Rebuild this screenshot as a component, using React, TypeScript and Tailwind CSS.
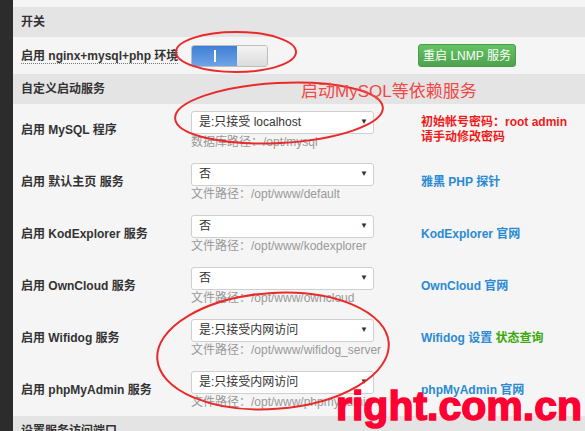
import React from "react";

const font = "font-['Liberation_Sans','Noto_Sans_CJK_SC',sans-serif]";

function Header({ title }: { title: string }) {
  return (
    <div className="h-[30px] shrink-0 bg-[#e4e4e4] pl-[8px] flex items-center text-[12px] font-bold text-[#333]">
      {title}
    </div>
  );
}

function Select({ value }: { value: string }) {
  return (
    <div className="w-[183px] h-[23px] bg-white border border-[#cfcfcf] rounded-[3px] flex items-center justify-between pl-[7px] pr-[5px] text-[12px] text-[#333]">
      <span>{value}</span>
      <span className="text-[8px] text-[#333]">▼</span>
    </div>
  );
}

type Row = {
  label: string;
  value: string;
  hintLabel: string;
  path: string;
  right: React.ReactNode;
};

const rows: Row[] = [
  {
    label: "启用 MySQL 程序",
    value: "是:只接受 localhost",
    hintLabel: "数据库路径：",
    path: "/opt/mysql",
    right: (
      <div className="text-[#ee1b1b] font-bold leading-[15px] whitespace-nowrap">
        <div>初始帐号密码：root admin</div>
        <div>请手动修改密码</div>
      </div>
    ),
  },
  {
    label: "启用 默认主页 服务",
    value: "否",
    hintLabel: "文件路径：",
    path: "/opt/www/default",
    right: <span className="text-[#2a8ad4] font-bold">雅黑 PHP 探针</span>,
  },
  {
    label: "启用 KodExplorer 服务",
    value: "否",
    hintLabel: "文件路径：",
    path: "/opt/www/kodexplorer",
    right: <span className="text-[#2a8ad4] font-bold">KodExplorer 官网</span>,
  },
  {
    label: "启用 OwnCloud 服务",
    value: "否",
    hintLabel: "文件路径：",
    path: "/opt/www/owncloud",
    right: <span className="text-[#2a8ad4] font-bold">OwnCloud 官网</span>,
  },
  {
    label: "启用 Wifidog 服务",
    value: "是:只接受内网访问",
    hintLabel: "文件路径：",
    path: "/opt/www/wifidog_server",
    right: (
      <span className="font-bold">
        <span className="text-[#2a8ad4]">Wifidog 设置 </span>
        <span className="text-[#3aa80a]">状态查询</span>
      </span>
    ),
  },
  {
    label: "启用 phpMyAdmin 服务",
    value: "是:只接受内网访问",
    hintLabel: "文件路径：",
    path: "/opt/www/phpmyadmin",
    right: <span className="text-[#2a8ad4] font-bold">phpMyAdmin 官网</span>,
  },
];

export default function App() {
  return (
    <div className={`relative w-[585px] h-[431px] overflow-hidden flex bg-[#f5f5f5] ${font}`}>
      {/* dark side bar */}
      <div className="w-[13px] shrink-0 bg-[#2c2c2c]" />

      <div className="flex-1 flex flex-col pt-[7px]">
        <Header title="开关" />

        <div className="h-[37px] shrink-0 flex items-center pl-[8px]">
          <div className="w-[170px] text-[12px] font-bold text-[#333]">
            <span className="border-b border-dotted border-[#777]">启用 nginx+mysql+php 环境</span>
          </div>
          <div className="w-[77px] h-[22px] flex rounded-[3px] border border-[#bdbdbd] overflow-hidden">
            <div className="w-[45px] bg-gradient-to-b from-[#3f7fd3] to-[#6ea3e6] flex items-center justify-center">
              <div className="w-[2px] h-[12px] bg-white" />
            </div>
            <div className="flex-1 bg-gradient-to-b from-[#f4f4f4] to-[#dcdcdc]" />
          </div>
          <div className="ml-[150px] w-[98px] h-[23px] rounded-[3px] border border-[#4a9a4a] bg-gradient-to-b from-[#62c462] to-[#4fa24f] flex items-center justify-center text-[12px] text-white">
            重启 LNMP 服务
          </div>
        </div>

        <Header title="自定义启动服务" />

        {rows.map((r) => (
          <div key={r.label} className="h-[52px] shrink-0 flex items-center pl-[8px] text-[12px]">
            <div className="w-[170px] font-bold text-[#333]">{r.label}</div>
            <div className="w-[230px] flex flex-col">
              <Select value={r.value} />
              <div className="h-[16px] leading-[16px] text-[#999] whitespace-nowrap">
                {r.hintLabel}
                {r.path}
              </div>
            </div>
            <div className="text-[12px]">{r.right}</div>
          </div>
        ))}

        <Header title="设置服务访问端口" />
      </div>

      {/* red annotations drawn over the screenshot */}
      <svg className="absolute left-0 top-0 pointer-events-none" width="585" height="431">
        <ellipse cx="236" cy="52" rx="60" ry="20" fill="none" stroke="#ea2a2a" strokeWidth="2" />
        <ellipse cx="279" cy="113" rx="104" ry="30" fill="none" stroke="#ea2a2a" strokeWidth="2" transform="rotate(-3 279 113)" />
        <ellipse cx="273" cy="351" rx="116" ry="58" fill="none" stroke="#ea2a2a" strokeWidth="2" transform="rotate(-4 273 351)" />
      </svg>
      <div className="absolute left-[301px] top-[82px] text-[17px] leading-[20px] text-[#f04848]">
        启动MySQL等依赖服务
      </div>
      <div className="absolute left-[336px] top-[382px] font-['Liberation_Sans',sans-serif] font-bold text-[41px] leading-[48px] text-[#ff0033] [-webkit-text-stroke:1.5px_#ff0033]">
        right.com.cn
      </div>
    </div>
  );
}
